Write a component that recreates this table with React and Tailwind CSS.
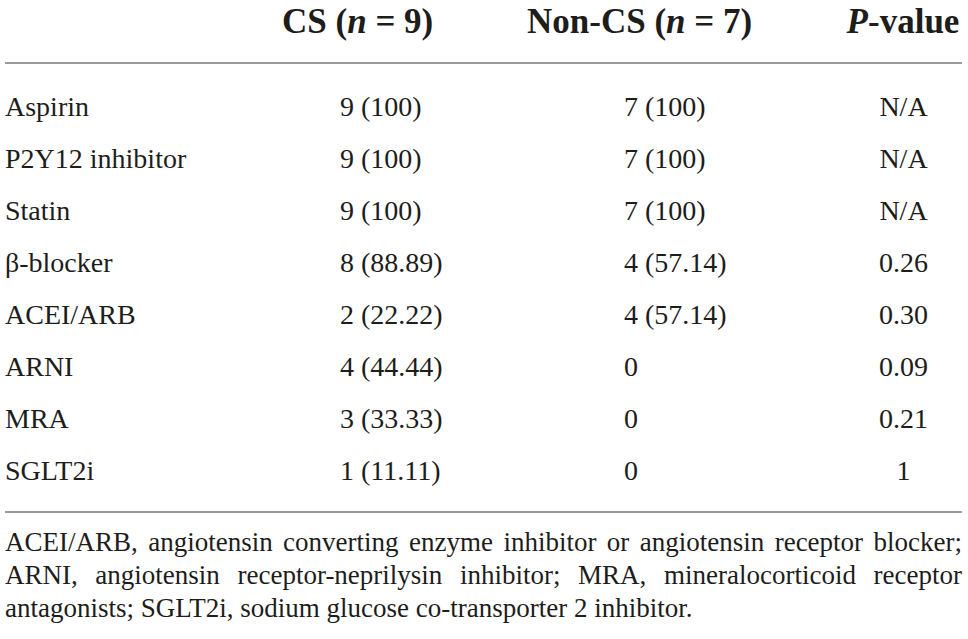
import React from 'react';

const rows = [
    ['Aspirin', '9 (100)', '7 (100)', 'N/A'],
    ['P2Y12 inhibitor', '9 (100)', '7 (100)', 'N/A'],
    ['Statin', '9 (100)', '7 (100)', 'N/A'],
    ['β-blocker', '8 (88.89)', '4 (57.14)', '0.26'],
    ['ACEI/ARB', '2 (22.22)', '4 (57.14)', '0.30'],
    ['ARNI', '4 (44.44)', '0', '0.09'],
    ['MRA', '3 (33.33)', '0', '0.21'],
    ['SGLT2i', '1 (11.11)', '0', '1'],
];

const App = () => {
    return (
        <div className="w-[968px] h-[639px] bg-white text-[#1d1d1b] overflow-hidden font-['Liberation_Serif',serif]">
            <div className="pl-[5px] pr-[6px]">
                <div className="grid grid-cols-[277px_245px_317px_1fr] pt-[2px] h-[42px] text-[35px] leading-[40px] font-bold">
                    <div></div>
                    <div>CS (<i>n</i> = 9)</div>
                    <div>Non-CS (<i>n</i> = 7)</div>
                    <div className="text-center"><i>P</i>-value</div>
                </div>
                <div className="mt-[20px] h-[2px] bg-[#9b9b9b]"></div>
                <div className="pt-[17px] text-[28px]">
                    {rows.map((r) => (
                        <div key={r[0]} className="grid grid-cols-[335px_284px_221px_1fr] h-[52px] leading-[52px]">
                            <div>{r[0]}</div>
                            <div>{r[1]}</div>
                            <div>{r[2]}</div>
                            <div className="text-center">{r[3]}</div>
                        </div>
                    ))}
                </div>
                <div className="mt-[14px] h-[2px] bg-[#9b9b9b]"></div>
                <div className="mt-[13px] text-[27px] leading-[33px]">
                    <div className="text-justify [text-align-last:justify] whitespace-nowrap">ACEI/ARB, angiotensin converting enzyme inhibitor or angiotensin receptor blocker;</div>
                    <div className="text-justify [text-align-last:justify] whitespace-nowrap">ARNI, angiotensin receptor-neprilysin inhibitor; MRA, mineralocorticoid receptor</div>
                    <div>antagonists; SGLT2i, sodium glucose co-transporter 2 inhibitor.</div>
                </div>
            </div>
        </div>
    );
};

export default App;
